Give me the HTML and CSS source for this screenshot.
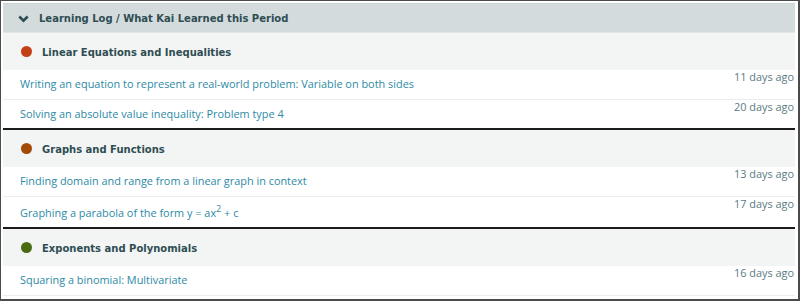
FILE: index.html
```html
<!DOCTYPE html>
<html lang="en">
  <head>
    <meta charset="UTF-8" />
    <meta name="viewport" content="width=device-width, initial-scale=1.0" />
    <title>Learning Log</title>
    <link rel="stylesheet" href="styles.css">
  </head>
  <body>
    <div class="frame">
      <div class="log-header">
        <svg class="chevron" width="11" height="8" viewBox="0 0 11 8">
          <polyline points="1.3,1.5 5.5,5.7 9.7,1.5" fill="none" stroke="#2e4d52" stroke-width="2.6" />
        </svg>
        <span>Learning Log / What Kai Learned this Period</span>
      </div>

      <div class="group">
        <div class="category">
          <span class="dot dot-linear"></span>
          <span>Linear Equations and Inequalities</span>
        </div>
        <div class="item">
          <a class="title" href="#">Writing an equation to represent a real-world problem: Variable on both sides</a>
          <span class="time">11 days ago</span>
        </div>
        <div class="item">
          <a class="title" href="#">Solving an absolute value inequality: Problem type 4</a>
          <span class="time">20 days ago</span>
        </div>
      </div>

      <div class="group">
        <div class="category">
          <span class="dot dot-graphs"></span>
          <span>Graphs and Functions</span>
        </div>
        <div class="item">
          <a class="title" href="#">Finding domain and range from a linear graph in context</a>
          <span class="time">13 days ago</span>
        </div>
        <div class="item">
          <a class="title" href="#">Graphing a parabola of the form y = ax<sup>2</sup> + c</a>
          <span class="time">17 days ago</span>
        </div>
      </div>

      <div class="group">
        <div class="category">
          <span class="dot dot-exponents"></span>
          <span>Exponents and Polynomials</span>
        </div>
        <div class="item">
          <a class="title" href="#">Squaring a binomial: Multivariate</a>
          <span class="time">16 days ago</span>
        </div>
        <div class="item">
          <span class="title"></span>
          <span class="time">20 days ago</span>
        </div>
      </div>
    </div>
  </body>
</html>
```
FILE: styles.css
```css
body {
  margin: 0;
  background-color: #fff;
}
.frame {
  height: 301px;
  box-sizing: border-box;
  border: solid #4b4b4b;
  border-width: 1px 2px 2px 1px;
  padding: 2px 3px 0 2px;
  overflow: hidden;
}
.log-header {
  display: flex;
  align-items: center;
  height: 28px;
  border-top: 1px solid #c8d1d3;
  border-bottom: 1px solid #e1e7e8;
  background-color: #d3dbdd;
  color: #2e4d52;
  font: bold 10px "DejaVu Sans", sans-serif;
}
.chevron {
  margin: 1px 10px 0 15px;
}
.category {
  display: flex;
  align-items: center;
  height: 36px;
  padding-top: 1px;
  background-color: #f3f5f5;
  color: #2e4d52;
  font: bold 10px "DejaVu Sans", sans-serif;
}
.dot {
  width: 11px;
  height: 11px;
  border-radius: 50%;
  margin: -1px 10px 0 18px;
}
.dot-linear {
  background-color: #c33f16;
}
.dot-graphs {
  background-color: #a44a07;
}
.dot-exponents {
  background-color: #4a6b12;
}
.item {
  display: flex;
  justify-content: space-between;
  align-items: flex-start;
  padding: 0 1px 7px 17px;
  border-bottom: 1px solid #e8eded;
  font: 10.9px "Open Sans", sans-serif;
}
.item:last-child {
  padding-bottom: 6px;
  border-bottom: 2px solid #1c1c1c;
}
.group:last-child .item:last-child {
  border-bottom-color: #e8eded;
}
.title {
  padding-top: 6px;
  line-height: 16px;
  color: #2c8aa5;
  text-decoration: none;
}
.title sup {
  font-size: 9px;
  line-height: 12px;
  vertical-align: 5px;
}
.time {
  padding-top: 1px;
  line-height: 12px;
  color: #5b7a7f;
  white-space: nowrap;
}
```
